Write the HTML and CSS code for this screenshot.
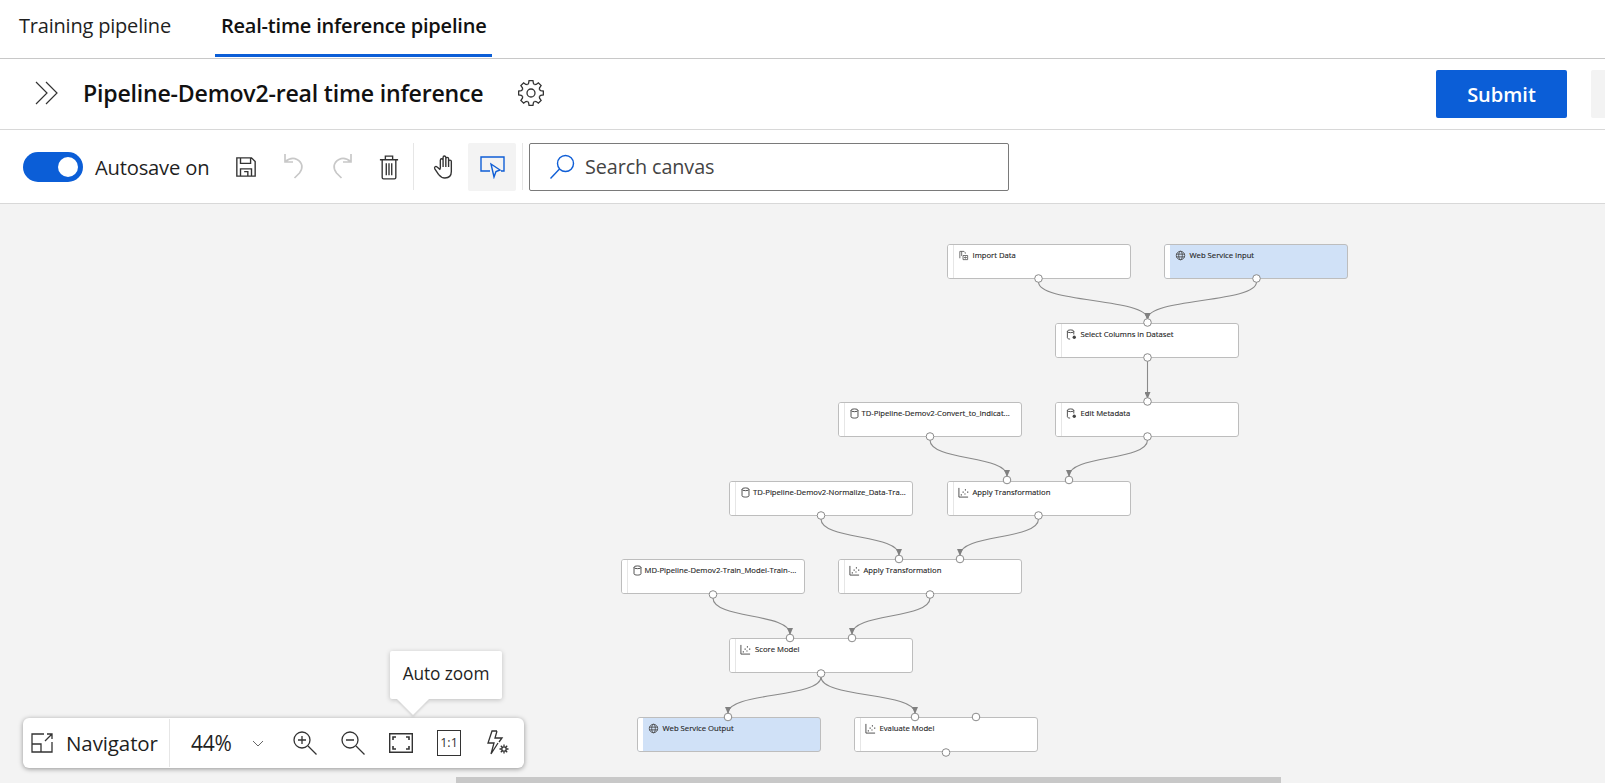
FILE: index.html
```html
<!DOCTYPE html>
<html lang="en">
<head>
    <meta charset="UTF-8">
    <title>Real-time inference pipeline</title>
    <link rel="stylesheet" href="styles.css">
</head>
<body>

<svg class="defs" width="0" height="0">
    <symbol id="icoImport" viewBox="0 0 12 12"><path d="M2 9V1.500h4.500L8 3v1M4 1.500v5M5.500 10.500h5V6H5.500zM6.500 8.200h2.500M8 7l1.200 1.200L8 9.400" fill="none" stroke="#555" stroke-width=".9"/></symbol>
    <symbol id="icoData" viewBox="0 0 12 12"><ellipse cx="5" cy="2.500" rx="3.500" ry="1.500" fill="none" stroke="#444"/><path d="M1.500 2.500v7c0 1 1.500 1.500 3 1.500M8.500 2.500V6" fill="none" stroke="#444"/><circle cx="9" cy="9" r="1.800" fill="#444"/></symbol>
    <symbol id="icoDb" viewBox="0 0 12 12"><ellipse cx="6" cy="2.500" rx="3.800" ry="1.500" fill="none" stroke="#444"/><path d="M2.200 2.500v7c0 1 1.700 1.500 3.800 1.500s3.800-.5 3.800-1.500v-7" fill="none" stroke="#444"/></symbol>
    <symbol id="icoPlot" viewBox="0 0 12 12"><path d="M1 1v10h10" fill="none" stroke="#444"/><path d="M3 8h1.200v1.200H3zM5 5h1.200v1.200H5zM7 7h1.200v1.200H7zM7.500 2.500h1.200v1.200H7.500zM10 5h1.200v1.200H10z" fill="#444"/></symbol>
    <symbol id="icoGlobe" viewBox="0 0 12 12"><g fill="none" stroke="#444" stroke-width=".9"><circle cx="6" cy="6" r="4.600"/><ellipse cx="6" cy="6" rx="2" ry="4.600"/><path d="M1.400 4.500h9.200M1.400 7.500h9.200"/></g></symbol>
    <g id="gearTooth"><path d="M10.560 5.690L11.580 4.300 12.040 1.650H15.960L16.420 4.300 17.440 5.690"/></g>
</svg>

<div class="tabs">
    <div class="tab">Training pipeline</div>
    <div class="tab tab-active">Real-time inference pipeline</div>
</div>

<div class="title-bar">
    <svg class="ico-expand" viewBox="0 0 26 26"><path d="M2 2l11 11L2 24M12 2l11 11-11 11"/></svg>
    <h1 class="title">Pipeline-Demov2-real time inference</h1>
    <svg class="ico-gear" viewBox="0 0 28 28">
        <g class="gear-lines">
            <use href="#gearTooth"/>
            <use href="#gearTooth" transform="rotate(45 14 14)"/>
            <use href="#gearTooth" transform="rotate(90 14 14)"/>
            <use href="#gearTooth" transform="rotate(135 14 14)"/>
            <use href="#gearTooth" transform="rotate(180 14 14)"/>
            <use href="#gearTooth" transform="rotate(225 14 14)"/>
            <use href="#gearTooth" transform="rotate(270 14 14)"/>
            <use href="#gearTooth" transform="rotate(315 14 14)"/>
            <circle cx="14" cy="14" r="4"/>
        </g>
    </svg>
    <button class="btn-submit">Submit</button>
    <div class="btn-grey"></div>
</div>

<div class="toolbar">
    <div class="toggle"><span class="knob"></span></div>
    <span class="autosave">Autosave on</span>
    <svg class="tool ico-save" viewBox="0 0 24 24"><path d="M2 2h16l4 4v16H2zM6 2v6h11V2M6 22v-8h12v8M10 17h4v5"/></svg>
    <svg class="tool ico-off" viewBox="0 0 22 26"><path d="M2 1v8h8M2 9c4-3.500 8-4.500 12-2.500 5.500 3 6.500 8.500 2.500 13.500l-5 5"/></svg>
    <svg class="tool ico-off" viewBox="0 0 22 26"><path d="M20 1v8h-8M20 9c-4-3.500-8-4.500-12-2.500C2.500 9.500 1.500 15 5.500 20l5 5"/></svg>
    <svg class="tool ico-trash" viewBox="0 0 22 28"><path d="M1 6h20M7 6V2h8v4M3.500 6v19.500c0 1 .5 1.500 1.500 1.500h12c1 0 1.500-.5 1.500-1.500V6M8 10v13M11 10v13M14 10v13"/></svg>
    <span class="sep"></span>
    <svg class="tool ico-hand" viewBox="0 0 24 28"><path d="M8 16V6.500a1.500 1.500 0 0 1 3 0V14M11 14V3.500a1.500 1.500 0 0 1 3 0V14M14 14V5a1.500 1.500 0 0 1 3 0v9M17 14V8a1.500 1.500 0 0 1 3 0v11c0 5-3 7-7 7-3.500 0-5-1.500-7-4l-4-6c-1-2 1-3.500 2.500-2L8 17"/></svg>
    <div class="tool-on">
        <svg class="ico-select" viewBox="0 0 26 24"><path d="M11 16H2V2h23v14h-3M12 9l9 6-4 1.500-2 5.500z"/></svg>
    </div>
    <span class="sep sep-last"></span>
    <div class="search">
        <svg class="ico-search" viewBox="0 0 26 26"><circle cx="16.500" cy="9.500" r="8"/><path d="M10.500 15L1.500 24.500"/></svg>
        <span>Search canvas</span>
    </div>
</div>

<div class="canvas">
    <div class="node n-import"><svg class="nico"><use href="#icoImport"/></svg><span>Import Data</span></div>
    <div class="node node-web n-wsi"><svg class="nico"><use href="#icoGlobe"/></svg><span>Web Service Input</span></div>
    <div class="node n-select"><svg class="nico"><use href="#icoData"/></svg><span>Select Columns in Dataset</span></div>
    <div class="node n-convert node-ds"><svg class="nico"><use href="#icoDb"/></svg><span>TD-Pipeline-Demov2-Convert_to_Indicat...</span></div>
    <div class="node n-edit"><svg class="nico"><use href="#icoData"/></svg><span>Edit Metadata</span></div>
    <div class="node n-normalize node-ds"><svg class="nico"><use href="#icoDb"/></svg><span>TD-Pipeline-Demov2-Normalize_Data-Tra...</span></div>
    <div class="node n-apply1"><svg class="nico"><use href="#icoPlot"/></svg><span>Apply Transformation</span></div>
    <div class="node n-train node-ds"><svg class="nico"><use href="#icoDb"/></svg><span>MD-Pipeline-Demov2-Train_Model-Train-...</span></div>
    <div class="node n-apply2"><svg class="nico"><use href="#icoPlot"/></svg><span>Apply Transformation</span></div>
    <div class="node n-score"><svg class="nico"><use href="#icoPlot"/></svg><span>Score Model</span></div>
    <div class="node node-web n-wso"><svg class="nico"><use href="#icoGlobe"/></svg><span>Web Service Output</span></div>
    <div class="node n-evaluate"><svg class="nico"><use href="#icoPlot"/></svg><span>Evaluate Model</span></div>

    <!-- viewBox keeps page coordinates so the edges are easy to read against the screenshot -->
    <svg class="edges" viewBox="0 204 1605 579">
        <defs>
            <marker id="arrow" markerUnits="userSpaceOnUse" markerWidth="7" markerHeight="6" refX="6" refY="3" orient="auto">
                <path d="M0 0L7 3 0 6z" fill="#808080"/>
            </marker>
        </defs>
        <g class="links">
            <path d="M1038.500 282C1038.500 303 1147.500 298 1147.500 319"/>
            <path d="M1256.500 282C1256.500 303 1147.500 298 1147.500 319"/>
            <path d="M1147.500 361V398"/>
            <path d="M930 440C930 461 1007 455 1007 476"/>
            <path d="M1147.500 440C1147.500 461 1069 455 1069 476"/>
            <path d="M821 519C821 540 899 534 899 555"/>
            <path d="M1038.500 519C1038.500 540 960 534 960 555"/>
            <path d="M713 598C713 619 790 613 790 634"/>
            <path d="M930 598C930 619 852 613 852 634"/>
            <path d="M821 677C821 698 728 692 728 713"/>
            <path d="M821 677C821 698 915 692 915 713"/>
        </g>
        <g class="ports">
            <circle cx="1038.500" cy="278.500" r="3.800"/><circle cx="1256.500" cy="278.500" r="3.800"/>
            <circle cx="1147.500" cy="322.500" r="3.800"/><circle cx="1147.500" cy="357.500" r="3.800"/>
            <circle cx="1147.500" cy="401.500" r="3.800"/><circle cx="1147.500" cy="436.500" r="3.800"/>
            <circle cx="930" cy="436.500" r="3.800"/>
            <circle cx="1007" cy="480" r="3.800"/><circle cx="1069" cy="480" r="3.800"/><circle cx="1038.500" cy="515.500" r="3.800"/>
            <circle cx="821" cy="515.500" r="3.800"/>
            <circle cx="899" cy="559" r="3.800"/><circle cx="960" cy="559" r="3.800"/><circle cx="930" cy="594.500" r="3.800"/>
            <circle cx="713" cy="594.500" r="3.800"/>
            <circle cx="790" cy="638" r="3.800"/><circle cx="852" cy="638" r="3.800"/><circle cx="821" cy="673.500" r="3.800"/>
            <circle cx="728" cy="717" r="3.800"/>
            <circle cx="915" cy="717" r="3.800"/><circle cx="976" cy="717" r="3.800"/><circle cx="946" cy="752.500" r="3.800"/>
        </g>
    </svg>

    <div class="tooltip">Auto zoom</div>

    <div class="navbar">
        <div class="nav-left">
            <svg class="nav-ico ico-nav" viewBox="0 0 22 20"><path d="M13 1H1v18h20V9M1 11h9v8M14 8l7-7M16 1h5v5"/></svg>
            <span>Navigator</span>
        </div>
        <div class="nav-zoom">44%</div>
        <svg class="chev" viewBox="0 0 12 7"><path d="M1 1l5 5 5-5"/></svg>
        <svg class="nav-ico ico-z" viewBox="0 0 24 24"><circle cx="9" cy="9" r="8"/><path d="M15 15l8.500 8.500M5 9h8M9 5v8"/></svg>
        <svg class="nav-ico ico-z" viewBox="0 0 24 24"><circle cx="9" cy="9" r="8"/><path d="M15 15l8.500 8.500M5 9h8"/></svg>
        <svg class="nav-ico ico-fit" viewBox="0 0 24 20"><path d="M.7.7h22.600v18.600H.7z"/><path class="fit-in" d="M4 7V4h3M17 4h3v3M20 13v3h-3M7 16H4v-3"/></svg>
        <div class="one-one">1:1</div>
        <svg class="nav-ico ico-auto" viewBox="0 0 24 26"><path d="M11 1H6L2 13h6l-3 11 7-11M11 1l-2 7h7l-3 4"/><circle cx="18" cy="19" r="2.200"/><path d="M18 14.500v2M18 21.500v2M13.500 19h2M20.500 19h2M14.800 15.800l1.400 1.400M19.800 20.800l1.400 1.400M14.800 22.200l1.400-1.400M19.800 17.200l1.400-1.400"/></svg>
    </div>

    <div class="hscroll"></div>
</div>

</body>
</html>
```

FILE: styles.css
```css
html, body { margin: 0; padding: 0; height: 783px; overflow: hidden; background: white; }
body { font-family: "Open Sans", "Noto Sans", sans-serif; color: #1f1f1f; }
.defs { position: absolute; }

.tabs { display: flex; height: 58px; padding-left: 19px; border-bottom: 1px solid #c8c8c8; box-sizing: content-box; }
.tab { font-size: 20px; line-height: 52px; letter-spacing: -0.2px; }
.tab-active { margin-left: 44px; padding: 0 6px; height: 54px; border-bottom: 3px solid #0b5ed7; font-weight: 600; color: #111; }

.title-bar { display: flex; align-items: center; height: 70px; border-bottom: 1px solid #d8d8d8; padding-left: 34px; }
.ico-expand { width: 26px; height: 26px; margin-bottom: 2px; fill: none; stroke: #333; stroke-width: 1.200; }
.title { font-size: 23.100px; font-weight: 600; margin: 0 0 3px 23px; letter-spacing: -0.2px; color: #111; }
.ico-gear { width: 28px; height: 28px; margin-left: 34px; margin-bottom: 2px; }
.gear-lines { fill: none; stroke: #333; stroke-width: 1.300; }
.btn-submit { margin-left: auto; width: 131px; height: 48px; background: #0b5ed7; color: white; border: none; border-radius: 2px; font-family: inherit; font-size: 20px; font-weight: 600; padding: 0; }
.btn-grey { width: 14px; height: 48px; margin-left: 24px; background: #f3f3f3; border-radius: 2px 0 0 2px; }

.toolbar { display: flex; align-items: center; height: 73px; border-bottom: 1px solid #d8d8d8; padding-left: 23px; }
.toggle { width: 60px; height: 30px; border-radius: 15px; background: #0b5ed7; position: relative; }
.knob { position: absolute; right: 5px; top: 5px; width: 20px; height: 20px; border-radius: 50%; background: white; }
.autosave { font-size: 20.200px; margin-left: 12px; letter-spacing: -0.2px; width: 140px; white-space: nowrap; }
.tool { fill: none; stroke: #333; stroke-width: 1.500; }
.ico-save { width: 22px; height: 22px; }
.ico-off { width: 22px; height: 26px; stroke: #c8c8c8; margin-left: 26px; margin-bottom: 2px; stroke-width: 1.700; }
.ico-trash { width: 20px; height: 26px; margin-left: 26px; }
.sep { width: 1px; height: 47px; background: #e6e6e6; margin-left: 14px; }
.ico-hand { width: 22px; height: 26px; margin-left: 19px; }
.tool-on { width: 48px; height: 48px; margin-left: 13px; background: #f3f3f3; border-radius: 2px; display: flex; align-items: center; justify-content: center; }
.ico-select { width: 26px; height: 24px; fill: none; stroke: #0f5ed6; stroke-width: 1.400; }
.sep-last { margin-left: 6px; }
.search { display: flex; align-items: center; width: 478px; height: 46px; margin-left: 6px; border: 1px solid #7a7a7a; border-radius: 2px; font-size: 19.800px; color: #444; letter-spacing: -0.1px; }
.ico-search { width: 26px; height: 26px; margin-left: 19px; margin-right: 10px; fill: none; stroke: #0f5ed6; stroke-width: 1.400; }

.canvas { position: relative; height: 579px; background: #f3f3f3; overflow: hidden; }
.edges { position: absolute; left: 0; top: 0; width: 1605px; height: 579px; pointer-events: none; }
.links path { fill: none; stroke: #8a8a8a; stroke-width: 1.100; marker-end: url(#arrow); }
.ports circle { fill: white; stroke: #8a8a8a; stroke-width: 1; }

.node { position: absolute; width: 184px; height: 35px; box-sizing: border-box; background: white; border: 1px solid #bdbdbd; border-radius: 3px; display: flex; align-items: flex-start; padding: 5px 0 0 10px; font-size: 7.700px; line-height: 11px; color: #222; overflow: hidden; white-space: nowrap; -webkit-text-stroke: .12px #222; }
.node::before { content: ""; position: absolute; left: 0; top: 0; bottom: 0; width: 5px; background: white; border-right: 1px solid #e6e6e6; }
.node-web { background: #d0e1f7; }
.node-web::before { border-right: none; }
.nico { width: 11px; height: 11px; margin-right: 4px; flex: none; position: relative; }
.node-ds .nico { margin-right: 2px; }

.n-import { left: 946.500px; top: 39.500px; }
.n-wsi { left: 1163.500px; top: 39.500px; }
.n-select { left: 1054.500px; top: 118.500px; }
.n-convert { left: 837.500px; top: 197.500px; }
.n-edit { left: 1054.500px; top: 197.500px; }
.n-normalize { left: 729px; top: 276.500px; }
.n-apply1 { left: 946.500px; top: 276.500px; }
.n-train { left: 620.500px; top: 355px; }
.n-apply2 { left: 837.500px; top: 355px; }
.n-score { left: 729px; top: 434px; }
.n-wso { left: 636.500px; top: 513px; }
.n-evaluate { left: 853.500px; top: 513px; }

.tooltip { position: absolute; left: 390px; top: 447px; width: 112px; height: 48px; background: white; border-radius: 2px; box-shadow: 0 1px 5px rgba(0,0,0,0.22); font-size: 17.300px; line-height: 46px; text-align: center; letter-spacing: -0.1px; white-space: nowrap; }
.tooltip::after { content: ""; position: absolute; left: 7px; top: 48px; border-left: 16px solid transparent; border-right: 16px solid transparent; border-top: 16px solid white; filter: drop-shadow(0 2px 1px rgba(0,0,0,0.12)); }

.navbar { position: absolute; left: 23px; top: 514px; width: 501px; height: 50px; box-sizing: border-box; display: flex; align-items: center; background: white; border-radius: 6px; box-shadow: 0 1px 5px rgba(0,0,0,0.4); }
.nav-left { display: flex; align-items: center; width: 146px; height: 48px; border-right: 1px solid #e6e6e6; font-size: 20.500px; letter-spacing: -0.1px; flex: none; }
.nav-ico { fill: none; stroke: #333; stroke-width: 1.300; flex: none; }
.ico-nav { width: 22px; height: 20px; margin-left: 8px; margin-right: 13px; }
.nav-zoom { font-size: 21px; margin-left: 21px; width: 41px; letter-spacing: -0.3px; }
.chev { width: 12px; height: 7px; margin-left: 20px; fill: none; stroke: #666; stroke-width: 1; flex: none; }
.ico-z { width: 24px; height: 24px; margin-left: 24px; }
.chev + .ico-z { margin-left: 29px; }
.ico-fit { width: 24px; height: 20px; margin-left: 24px; stroke-width: 1.400; }
.fit-in { stroke-width: 1.600; }
.one-one { width: 22px; height: 24px; margin-left: 24px; border: 1px solid #333; box-sizing: content-box; font-size: 12.500px; line-height: 24px; text-align: center; color: #333; flex: none; }
.ico-auto { width: 24px; height: 28px; margin-left: 25px; }

.hscroll { position: absolute; left: 456px; right: 324px; bottom: 0; height: 6px; background: #c8c8c8; }
```
